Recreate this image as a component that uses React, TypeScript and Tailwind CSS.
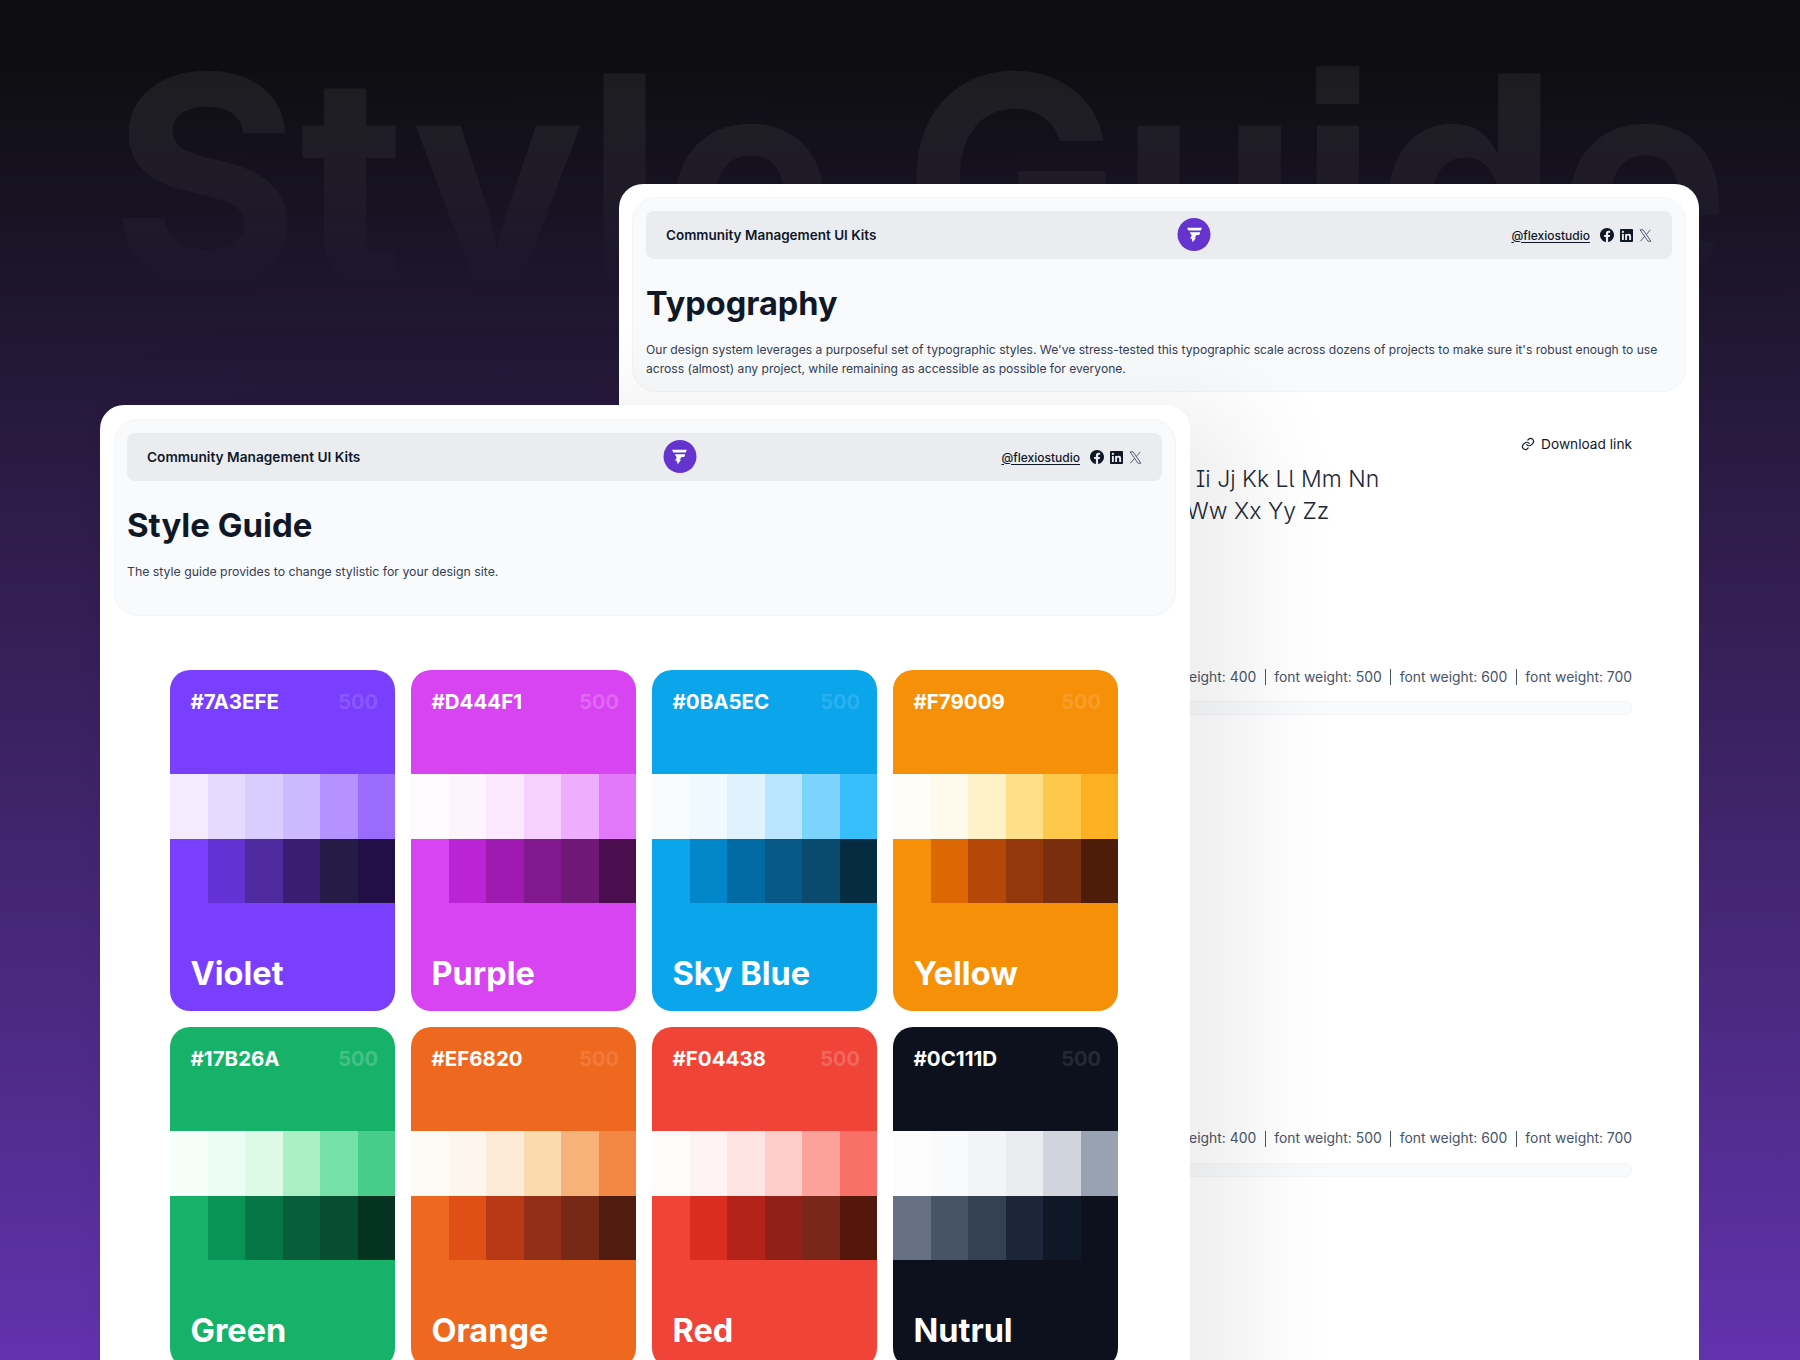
import React from 'react';

const shades = {
  violet: {
    light: ['#f4ebff', '#e6dafe', '#d9ccfe', '#cdbafe', '#b491fe', '#9b6bfe'],
    dark: ['#7a3efe', '#6431d2', '#4e2a9e', '#3a1d72', '#251b47', '#230f47'],
  },
  purple: {
    light: ['#fefafe', '#fdf4ff', '#fbe8ff', '#f6d0fe', '#eeaefd', '#e478fa'],
    dark: ['#d844f1', '#ba24d5', '#9f1ab1', '#821890', '#6f1877', '#4a0e4e'],
  },
  sky: {
    light: ['#f8fcff', '#f0f9ff', '#e0f2fe', '#b9e6fe', '#7cd4fd', '#36bffa'],
    dark: ['#0ba5ec', '#0086c9', '#026aa2', '#065986', '#0b4a6f', '#062c41'],
  },
  yellow: {
    light: ['#fffdf8', '#fffaeb', '#fef0c7', '#fedf89', '#fec84b', '#fdb022'],
    dark: ['#f79009', '#dc6803', '#b54708', '#93370d', '#7a2e0e', '#4e1d09'],
  },
  green: {
    light: ['#f6fef9', '#ecfdf3', '#dcfae6', '#abefc6', '#75e0a7', '#47cd89'],
    dark: ['#17b26a', '#079455', '#067647', '#085d3a', '#074d31', '#053321'],
  },
  orange: {
    light: ['#fefaf5', '#fef6ee', '#fdead7', '#f9dbaf', '#f7b27a', '#f38744'],
    dark: ['#ef6820', '#e04f16', '#b93815', '#932f19', '#772917', '#511c10'],
  },
  red: {
    light: ['#fffbfa', '#fef3f2', '#fee4e2', '#fecdca', '#fda29b', '#f97066'],
    dark: ['#f04438', '#d92d20', '#b42318', '#912018', '#7a271a', '#55160c'],
  },
  neutral: {
    light: ['#fcfcfd', '#f9fafb', '#f2f4f7', '#eaecf0', '#d0d5dd', '#98a2b3'],
    dark: ['#667085', '#475467', '#344054', '#1c2539', '#101828', '#0c111d'],
  },
};

const swatches = [
  { hex: '#7A3EFE', name: 'Violet', bg: 'bg-[#7a3efe]', dim: 'text-white/15', set: shades.violet },
  { hex: '#D444F1', name: 'Purple', bg: 'bg-[#d844f1]', dim: 'text-white/20', set: shades.purple },
  { hex: '#0BA5EC', name: 'Sky Blue', bg: 'bg-[#0ba5ec]', dim: 'text-white/15', set: shades.sky },
  { hex: '#F79009', name: 'Yellow', bg: 'bg-[#f79009]', dim: 'text-white/15', set: shades.yellow },
  { hex: '#17B26A', name: 'Green', bg: 'bg-[#17b26a]', dim: 'text-white/20', set: shades.green },
  { hex: '#EF6820', name: 'Orange', bg: 'bg-[#ef6820]', dim: 'text-white/15', set: shades.orange },
  { hex: '#F04438', name: 'Red', bg: 'bg-[#f04438]', dim: 'text-white/20', set: shades.red },
  { hex: '#0C111D', name: 'Nutrul', bg: 'bg-[#0c111d]', dim: 'text-white/10', set: shades.neutral },
];

const Logo = () => (
  <div className="w-[33px] h-[33px] rounded-full bg-[#6534cf] flex items-center justify-center">
    <svg width="20" height="20" viewBox="0 0 19 19" fill="#fff">
      <path d="M2.5 2.5h14l-1 2.8H3.5z" />
      <path d="M5 7h10l-1 2.6H9.2L11.6 9.7 9.4 12.2h1.6l-3.2 4.3-.9-3.5-1.6-.1 1.6-3z" />
    </svg>
  </div>
);

const FacebookIcon = () => (
  <svg width="14" height="14" viewBox="0 0 24 24" fill="#101828">
    <path d="M24 12.07C24 5.4 18.63 0 12 0S0 5.4 0 12.07c0 6.03 4.39 11.02 10.13 11.93v-8.44H7.08v-3.49h3.05V9.41c0-3.02 1.79-4.69 4.53-4.69 1.31 0 2.69.24 2.69.24v2.97h-1.51c-1.49 0-1.96.93-1.96 1.89v2.25h3.33l-.53 3.49h-2.8V24C19.61 23.09 24 18.1 24 12.07z" />
  </svg>
);

const LinkedinIcon = () => (
  <svg width="13" height="13" viewBox="0 0 24 24" fill="#101828">
    <path d="M22 0H2C.9 0 0 .9 0 2v20c0 1.1.9 2 2 2h20c1.1 0 2-.9 2-2V2c0-1.1-.9-2-2-2zM7.1 20.4H3.6V9h3.5v11.4zM5.3 7.4a2 2 0 1 1 0-4.1 2 2 0 0 1 0 4.1zm15.1 13h-3.5v-5.6c0-1.3 0-3-1.8-3s-2.1 1.4-2.1 2.9v5.7H9.5V9h3.4v1.6c.5-.9 1.6-1.8 3.4-1.8 3.6 0 4.2 2.4 4.2 5.4v6.2z" />
  </svg>
);

const XIcon = () => (
  <svg width="13" height="13" viewBox="0 0 24 24" fill="none" stroke="#344054" strokeWidth="1.5">
    <path d="M2 1.5h5.5L22 22.5h-5.5z" />
    <path d="M21 1.5 13.3 10.4M10.4 13.7 2.6 22.5" />
  </svg>
);

const TopBar = ({ titleClass }: { titleClass: string }) => (
  <div className="relative h-12 rounded-lg bg-[#eaecf0] pl-5 pr-5 flex items-center justify-between">
    <span className={`font-semibold text-[#101828] ${titleClass}`}>Community Management UI Kits</span>
    <div className="absolute left-[calc(50%+35px)] top-[7px] -translate-x-1/2">
      <Logo />
    </div>
    <div className="flex items-center gap-[5px]">
      <span className="mt-[1px] text-[12px] font-medium text-[#101828] underline underline-offset-2 mr-[5px]">@flexiostudio</span>
      <FacebookIcon />
      <span className="ml-[1px]"><LinkedinIcon /></span>
      <span className="ml-[1px]"><XIcon /></span>
    </div>
  </div>
);

const WeightRow = () => (
  <div className="flex flex-col items-end">
    <div className="flex items-center text-[13.9px] text-[#475467] whitespace-nowrap">
      <span>font weight: 400</span>
      <span className="w-px h-4 bg-[#475467] mx-[8.5px]"></span>
      <span>font weight: 500</span>
      <span className="w-px h-4 bg-[#475467] mx-[8.5px]"></span>
      <span>font weight: 600</span>
      <span className="w-px h-4 bg-[#475467] mx-[8.5px]"></span>
      <span>font weight: 700</span>
    </div>
    <div className="w-[500px] h-[14px] mt-[14px] rounded-md bg-[#f9fafb] border border-[#f2f4f7]"></div>
  </div>
);

const Swatch = ({ item }: { item: (typeof swatches)[number] }) => (
  <div className={`w-[225px] h-[341px] shrink-0 rounded-[20px] overflow-hidden flex flex-col text-white ${item.bg}`}>
    <div className="h-[104px] pl-[20.5px] pr-[17px] pt-[19px] flex justify-between">
      <span className="text-[20.5px] leading-[26px] font-bold">{item.hex}</span>
      <span className={`text-[20px] leading-[26px] font-bold ${item.dim}`}>500</span>
    </div>
    <div className="grid grid-cols-6 h-[65px]">
      {item.set.light.map((c) => (
        <div key={c} style={{ backgroundColor: c }}></div>
      ))}
    </div>
    <div className="grid grid-cols-6 h-[64px]">
      {item.set.dark.map((c) => (
        <div key={c} style={{ backgroundColor: c }}></div>
      ))}
    </div>
    <div className="mt-auto pl-[20.5px] pb-[15px] text-[32.5px] leading-[44px] font-bold">{item.name}</div>
  </div>
);

export default function App() {
  return (
    <div className="relative w-[1800px] h-[1360px] overflow-hidden bg-gradient-to-b from-[#0e0e12] from-5% via-[#2a1a42] via-33% to-[#6232ad] font-['Inter',sans-serif] [font-optical-sizing:none]">
      {/* Big faded title */}
      <div className="absolute left-[111px] top-[6px] text-[288px] leading-[1.2] font-bold whitespace-nowrap text-transparent bg-clip-text bg-gradient-to-b from-white/[0.06] from-30% to-transparent to-85% [font-feature-settings:'ss07']">
        Style Guide
      </div>

      {/* Typography window */}
      <div className="absolute left-[619px] top-[184px] w-[1080px] h-[1176px] bg-white rounded-t-[24px] p-[13px]">
        <div className="h-[195px] rounded-[24px] bg-[#f9fafb] border border-[#f2f4f7] p-[13px]">
          <TopBar titleClass="text-[13.5px]" />
          <h1 className="mt-[23px] text-[32.5px] leading-[44px] font-bold text-[#101828]">Typography</h1>
          <p className="mt-[14px] text-[12.1px] leading-[19px] text-[#344054] whitespace-nowrap">
            Our design system leverages a purposeful set of typographic styles. We've stress-tested this typographic scale across dozens of projects to make sure it's robust enough to use
            <br />
            across (almost) any project, while remaining as accessible as possible for everyone.
          </p>
        </div>
        <div className="pr-[54px] flex flex-col items-end">
          <div className="mt-[42px] flex items-center gap-[6px] text-[13.7px] text-[#101828]">
            <svg width="14" height="14" viewBox="0 0 24 24" fill="none" stroke="#101828" strokeWidth="2" strokeLinecap="round" strokeLinejoin="round">
              <path d="M10 13a5 5 0 0 0 7.5.5l3-3a5 5 0 0 0-7-7l-1.7 1.7" />
              <path d="M14 11a5 5 0 0 0-7.5-.5l-3 3a5 5 0 0 0 7 7l1.7-1.7" />
            </svg>
            Download link
          </div>
          <div className="self-start ml-[285px] mt-[8px] text-[23px] leading-[32px] font-light text-[#1d2939] [font-feature-settings:'cv05','cv08']">
            <p className="whitespace-nowrap">Aa Bb Cc Dd Ee Ff Gg Hh Ii Jj Kk Ll Mm Nn</p>
            <p className="whitespace-nowrap">Oo Pp Qq Rr Ss Tt Uu Vv Ww Xx Yy Zz</p>
          </div>
          <div className="mt-[140px]"><WeightRow /></div>
          <div className="mt-[413px]"><WeightRow /></div>
        </div>
      </div>

      {/* Style guide window */}
      <div className="absolute left-[100px] top-[405px] w-[1090px] h-[1100px] bg-white rounded-t-[24px] p-[14px] shadow-[60px_0_100px_rgba(0,0,0,0.07)]">
        <div className="h-[197px] rounded-[24px] bg-[#f9fafb] border border-[#f2f4f7] pt-[13px] pl-[12px] pr-[13px]">
          <TopBar titleClass="text-[13.7px]" />
          <h1 className="mt-[22px] text-[33px] leading-[44px] font-bold text-[#101828]">Style Guide</h1>
          <p className="mt-[15px] text-[12.3px] leading-[19px] text-[#344054]">The style guide provides to change stylistic for your design site.</p>
        </div>
        <div className="mt-[54px] ml-[56px] grid grid-cols-[repeat(4,225px)] gap-x-4 gap-y-4">
          {swatches.map((s) => (
            <Swatch key={s.name} item={s} />
          ))}
        </div>
      </div>
    </div>
  );
}
